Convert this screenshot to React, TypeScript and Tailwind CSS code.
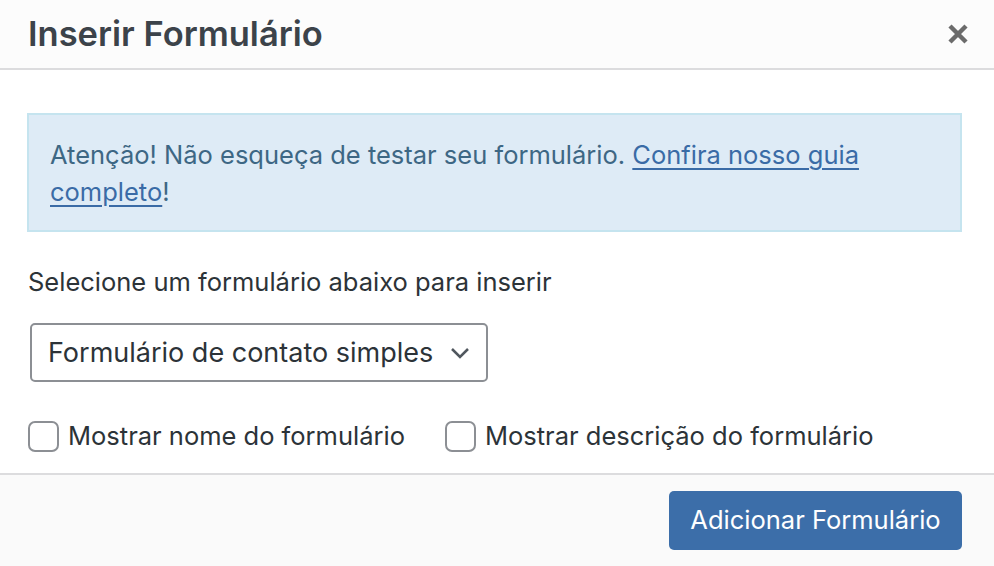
const font = { fontFamily: "Inter, 'Noto Sans', sans-serif" };

const Checkbox = ({ label }: { label: string }) => {
  return (
    <label className="flex items-center gap-[9px] cursor-pointer">
      <span className="w-[31px] h-[31px] rounded-[7px] border-2 border-[#8c8f94] bg-white"></span>
      <span className="text-[25.5px] text-[#2c3338]">{label}</span>
    </label>
  );
};

export default function App() {
  return (
    <div className="w-[994px] h-[566px] bg-white flex flex-col overflow-hidden" style={font}>
      {/* header */}
      <div className="h-[70px] shrink-0 bg-[#fcfcfc] border-b-2 border-[#dcdcde] flex items-center justify-between pl-[28px] pr-[24px]">
        <h1 className="text-[34.5px] font-semibold text-[#3c434a]">Inserir Formulário</h1>
        <button className="w-[24px] h-[24px] flex items-center justify-center text-[#6b6b6b]">
          <svg width="22" height="22" viewBox="0 0 22 22">
            <path d="M3 3 L19 19 M19 3 L3 19" stroke="currentColor" strokeWidth="4.5" strokeLinecap="butt" />
          </svg>
        </button>
      </div>

      {/* body */}
      <div className="flex-1 pl-[27px] pr-[32px] pt-[43px]">
        <div className="bg-[#deebf6] border-2 border-[#c5e4ef] px-[21px] pt-[21px] pb-[20px] text-[25.5px] leading-[37px] text-[#3d6784]">
          Atenção! Não esqueça de testar seu formulário.{" "}
          <a href="#" className="text-[#3a6ba6] underline underline-offset-[4px]">
            Confira nosso guia completo
          </a>
          !
        </div>

        <p className="mt-[31px] ml-[1px] text-[25.5px] text-[#2c3338]">Selecione um formulário abaixo para inserir</p>

        <div className="mt-[22px] ml-[3px] w-[458px] h-[59px] rounded-[5px] border-2 border-[#8c8f94] flex items-center justify-between pl-[16px] pr-[16px] bg-white">
          <span className="text-[27px] text-[#2c3338]">Formulário de contato simples</span>
          <svg width="20" height="12" viewBox="0 0 20 12">
            <path d="M2 2 L10 10 L18 2" fill="none" stroke="#50575e" strokeWidth="2.5" />
          </svg>
        </div>

        <div className="mt-[35px] ml-[1px] flex items-center gap-[40px]">
          <Checkbox label="Mostrar nome do formulário" />
          <Checkbox label="Mostrar descrição do formulário" />
        </div>
      </div>

      {/* footer */}
      <div className="h-[93px] shrink-0 bg-[#fafafa] border-t-2 border-[#dcdcde] flex items-start justify-end pt-[16px] pr-[32px]">
        <button className="w-[293px] h-[59px] rounded-[5px] bg-[#3c6ea9] text-white text-[25.5px]">
          Adicionar Formulário
        </button>
      </div>
    </div>
  );
}
